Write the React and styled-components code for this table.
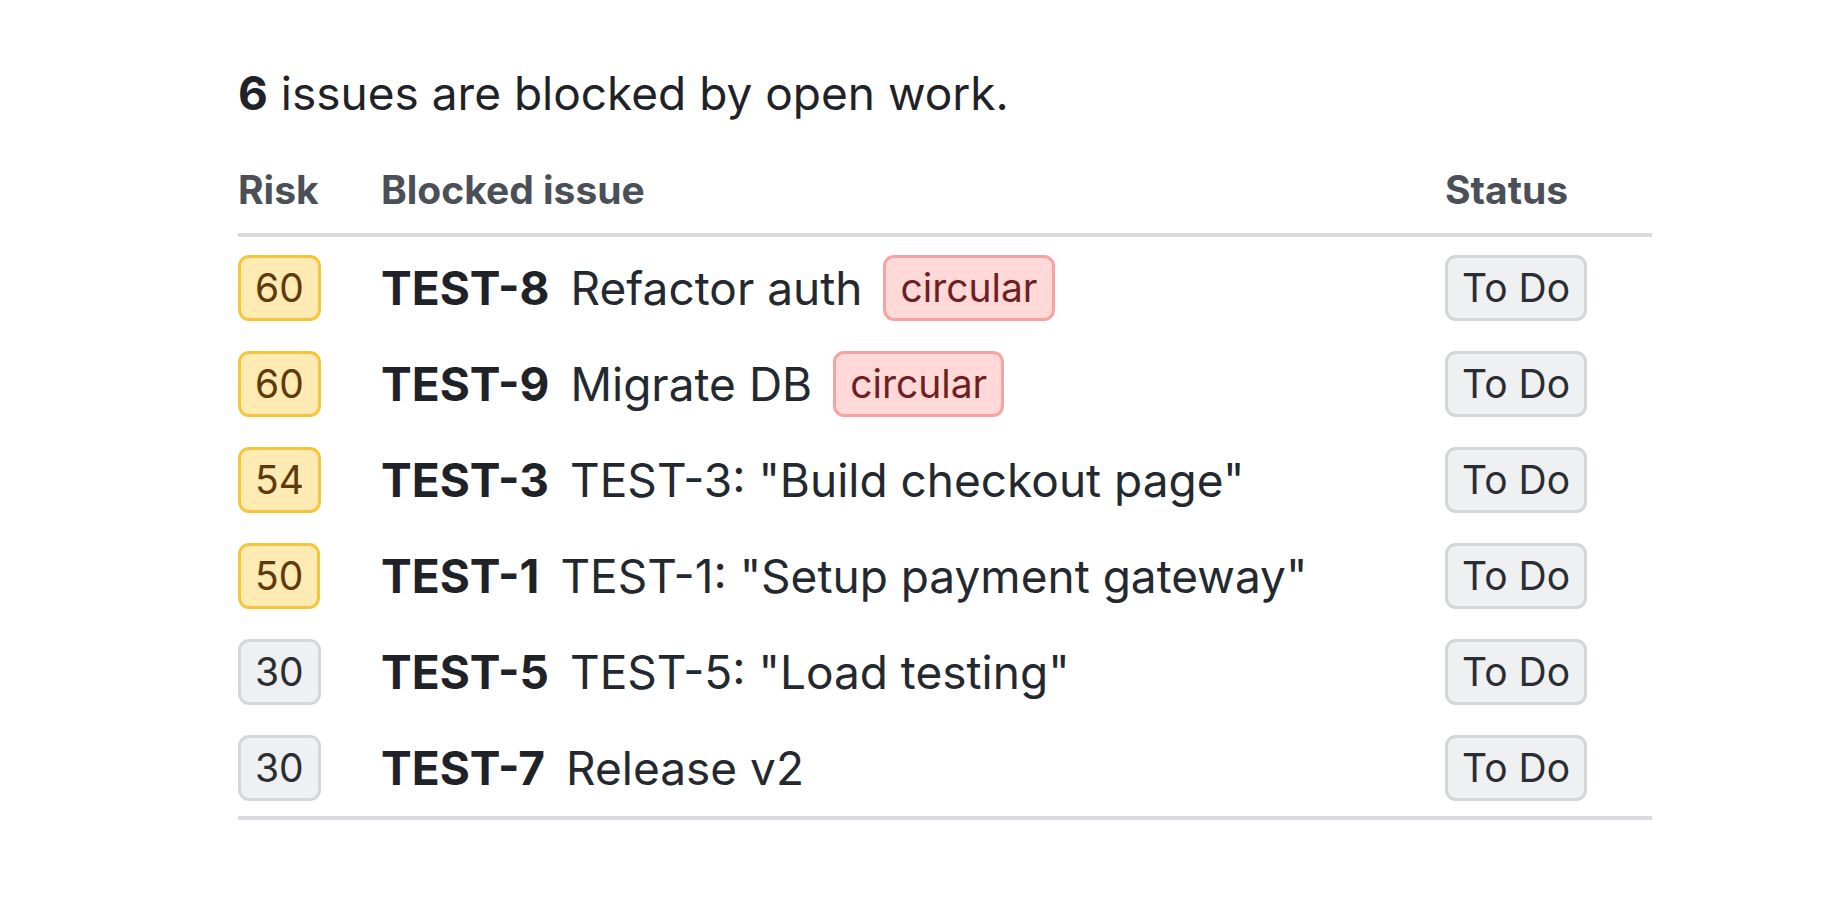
import styled, { createGlobalStyle } from 'styled-components'

const GlobalStyle = createGlobalStyle`
  html, body {
    margin: 0;
    padding: 0;
    background: #ffffff;
  }
  body {
    font-family: Inter, "Noto Sans", "Liberation Sans", sans-serif;
    color: #1f2328;
  }
`

const Wrapper = styled.div`
  padding: 61px 0 0 238px;
`

const Summary = styled.div`
  font-size: 46px;
  line-height: 64px;
  color: #1f2328;
  margin-bottom: 41px;

  strong {
    font-weight: 700;
  }
`

const Table = styled.table`
  width: 1414px;
  border-collapse: separate;
  border-spacing: 0;
`

const HeadCell = styled.th`
  text-align: left;
  font-size: 39px;
  line-height: 48px;
  font-weight: 700;
  color: #4b5058;
  padding: 0 0 19px;
  border-bottom: 4px solid #d9dbde;
  width: ${props => props.width || 'auto'};
`

// first row carries a small gap under the header rule, last row carries the closing rule
const Row = styled.tr`
  height: ${props => (props.first ? '99px' : props.last ? '100px' : '96px')};
`

const Cell = styled.td`
  padding: ${props => (props.first ? '3px 0 0' : '0')};
  vertical-align: middle;
  border-bottom: ${props => (props.last ? '4px solid #d9dbde' : 'none')};
`

const IssueLine = styled.div`
  display: flex;
  align-items: center;
  gap: 21px;
  font-size: 46px;
  white-space: nowrap;
`

const IssueKey = styled.span`
  font-weight: 700;
  color: #1f2328;
`

const IssueTitle = styled.span`
  color: #24292f;
`

const tones = {
  warn: { bg: '#feeab3', border: '#f5c63c', color: '#5e3a0c' },
  neutral: { bg: '#eff0f2', border: '#d3d6db', color: '#2a2e33' },
  danger: { bg: '#ffd8d8', border: '#f6a3a3', color: '#6d1f22' },
}

const Pill = styled.span`
  display: inline-block;
  box-sizing: border-box;
  height: 66px;
  line-height: 60px;
  padding: 0 14px;
  font-size: 39px;
  border-radius: 11px;
  border: 3px solid ${props => tones[props.tone].border};
  background: ${props => tones[props.tone].bg};
  color: ${props => tones[props.tone].color};
`

const issues = [
  { risk: 60, key: 'TEST-8', title: 'Refactor auth', circular: true },
  { risk: 60, key: 'TEST-9', title: 'Migrate DB', circular: true },
  { risk: 54, key: 'TEST-3', title: 'TEST-3: "Build checkout page"' },
  { risk: 50, key: 'TEST-1', title: 'TEST-1: "Setup payment gateway"' },
  { risk: 30, key: 'TEST-5', title: 'TEST-5: "Load testing"' },
  { risk: 30, key: 'TEST-7', title: 'Release v2' },
]

export default function App() {
  return (
    <Wrapper>
      <GlobalStyle />
      <Summary>
        <strong>{issues.length}</strong> issues are blocked by open work.
      </Summary>
      <Table>
        <thead>
          <tr>
            <HeadCell width="143px">Risk</HeadCell>
            <HeadCell>Blocked issue</HeadCell>
            <HeadCell width="207px">Status</HeadCell>
          </tr>
        </thead>
        <tbody>
          {issues.map((issue, index) => {
            const first = index === 0
            const last = index === issues.length - 1
            return (
              <Row key={issue.key} first={first} last={last}>
                <Cell first={first} last={last}>
                  <Pill tone={issue.risk >= 50 ? 'warn' : 'neutral'}>{issue.risk}</Pill>
                </Cell>
                <Cell first={first} last={last}>
                  <IssueLine>
                    <IssueKey>{issue.key}</IssueKey>
                    <IssueTitle>{issue.title}</IssueTitle>
                    {issue.circular && <Pill tone="danger">circular</Pill>}
                  </IssueLine>
                </Cell>
                <Cell first={first} last={last}>
                  <Pill tone="neutral">To Do</Pill>
                </Cell>
              </Row>
            )
          })}
        </tbody>
      </Table>
    </Wrapper>
  )
}
